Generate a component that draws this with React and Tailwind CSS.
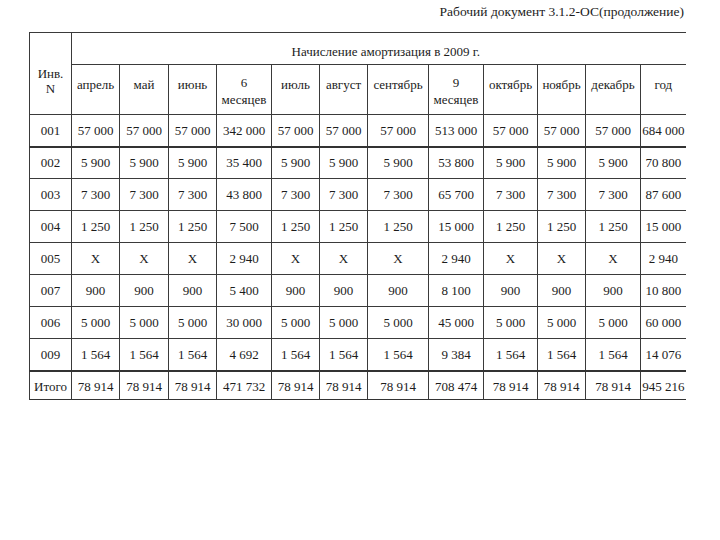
import React from "react";

const months1 = ["апрель", "май", "июнь"];
const widths = [42, 48, 49, 48, 55, 48, 48, 61, 55, 54, 48, 55, 45];

const rows = [
  ["001", "57 000", "57 000", "57 000", "342 000", "57 000", "57 000", "57 000", "513 000", "57 000", "57 000", "57 000", "684 000"],
  ["002", "5 900", "5 900", "5 900", "35 400", "5 900", "5 900", "5 900", "53 800", "5 900", "5 900", "5 900", "70 800"],
  ["003", "7 300", "7 300", "7 300", "43 800", "7 300", "7 300", "7 300", "65 700", "7 300", "7 300", "7 300", "87 600"],
  ["004", "1 250", "1 250", "1 250", "7 500", "1 250", "1 250", "1 250", "15 000", "1 250", "1 250", "1 250", "15 000"],
  ["005", "X", "X", "X", "2 940", "X", "X", "X", "2 940", "X", "X", "X", "2 940"],
  ["007", "900", "900", "900", "5 400", "900", "900", "900", "8 100", "900", "900", "900", "10 800"],
  ["006", "5 000", "5 000", "5 000", "30 000", "5 000", "5 000", "5 000", "45 000", "5 000", "5 000", "5 000", "60 000"],
  ["009", "1 564", "1 564", "1 564", "4 692", "1 564", "1 564", "1 564", "9 384", "1 564", "1 564", "1 564", "14 076"],
  ["Итого", "78 914", "78 914", "78 914", "471 732", "78 914", "78 914", "78 914", "708 474", "78 914", "78 914", "78 914", "945 216"],
];

const cellBase =
  "border-l border-[#3a3a3a] p-0 text-center align-middle whitespace-nowrap font-['Liberation_Serif','Times_New_Roman',serif] text-[13px] leading-[15px] text-[#1c1c1c]";

export default function App() {
  return (
    <div className="w-[720px] h-[540px] bg-white text-[#1c1c1c] overflow-hidden font-['Liberation_Serif','Times_New_Roman',serif]">
      <div className="flex justify-end pr-[36px] pt-[4px] h-[32px] text-[13.5px] leading-[16px]">
        Рабочий документ 3.1.2-ОС(продолжение)
      </div>
      <table className="ml-[29px] border-collapse table-fixed w-[656px] font-['Liberation_Serif','Times_New_Roman',serif] text-[13px]">
        <colgroup>
          {widths.map((w, i) => (
            <col key={i} style={{ width: w }} />
          ))}
        </colgroup>
        <thead>
          <tr className="h-[32px] border-t border-[#3a3a3a]">
            <td rowSpan={2} className={cellBase + " border-b border-[#3a3a3a]"}>
              <div className="pt-[14px]">Инв.</div>
              <div>N</div>
            </td>
            <td colSpan={12} className={cellBase + " pt-[6px] pl-[14px] text-[13.5px]"}>
              Начисление амортизация в 2009 г.
            </td>
          </tr>
          <tr className="h-[50px] border-t border-[#3a3a3a]">
            {months1.map((m) => (
              <td key={m} className={cellBase + " pb-[10px]"}>{m}</td>
            ))}
            <td className={cellBase + " pt-[3px]"}>
              <div>6</div>
              <div className="pt-[2px]">месяцев</div>
            </td>
            {["июль", "август", "сентябрь"].map((m) => (
              <td key={m} className={cellBase + " pb-[10px]"}>{m}</td>
            ))}
            <td className={cellBase + " pt-[3px]"}>
              <div>9</div>
              <div className="pt-[2px]">месяцев</div>
            </td>
            {["октябрь", "ноябрь", "декабрь", "год"].map((m) => (
              <td key={m} className={cellBase + " pb-[10px]"}>{m}</td>
            ))}
          </tr>
        </thead>
        <tbody>
          {rows.map((r, ri) => {
            const thick = ri === 1 || ri === 8;
            return (
              <tr
                key={ri}
                className={
                  (ri === 8 ? "h-[29px] border-b " : "h-[32px] ") +
                  (thick ? "border-t-2 border-[#333]" : "border-t border-[#3a3a3a]")
                }
              >
                {r.map((c, ci) => (
                  <td key={ci} className={cellBase + (ri === 8 ? " pt-[2px]" : "")}>
                    {c}
                  </td>
                ))}
              </tr>
            );
          })}
        </tbody>
      </table>
    </div>
  );
}
